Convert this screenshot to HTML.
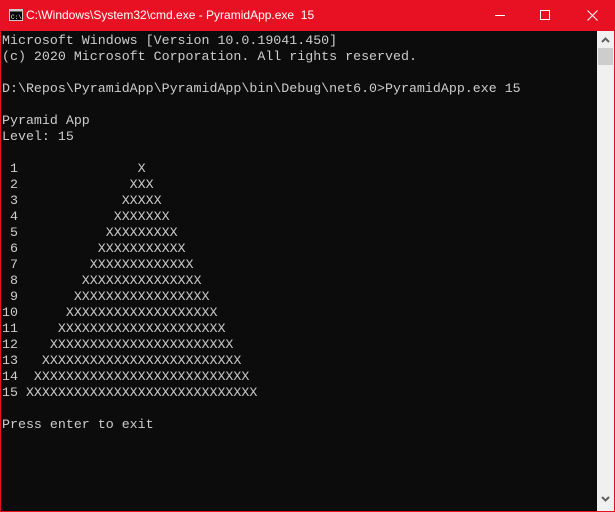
<!DOCTYPE html>
<html><head><style>
*{margin:0;padding:0;box-sizing:border-box}
body{width:615px;height:512px;background:#e81123;position:relative;overflow:hidden;font-family:"Liberation Sans",sans-serif}
#tb{position:absolute;left:0;top:0;width:615px;height:31px;color:#fff;font-size:12px}
#console{position:absolute;left:1px;top:31px;width:596px;height:480px;background:#0c0c0c}
pre{position:absolute;left:1px;top:2px;font-family:"Liberation Mono",monospace;font-size:13.3px;line-height:16px;color:#cccccc}
#sb{position:absolute;left:597px;top:31px;width:17px;height:480px;background:#f0f0f0}
#thumb{position:absolute;left:1px;top:17px;width:15px;height:17px;background:#cdcdcd}
</style></head><body>
<div id="tb">
<svg style="position:absolute;left:9px;top:9px" width="14" height="12"><rect x="0.5" y="0.5" width="13" height="11" fill="#000" stroke="#ccc"/><rect x="0.5" y="0.5" width="13" height="2" fill="#ccc"/><text x="2" y="10" font-size="6" fill="#fff" font-family="Liberation Mono">C:\</text></svg>
<span style="position:absolute;left:26px;top:8px">C:\Windows\System32\cmd.exe - PyramidApp.exe&nbsp; 15</span>
<div style="position:absolute;left:495px;top:15px;width:10px;height:1px;background:#fff"></div>
<div style="position:absolute;left:540px;top:10px;width:10px;height:10px;border:1px solid #fff"></div>
<svg style="position:absolute;left:587px;top:10px" width="11" height="11"><path d="M0.5 0.5L10.5 10.5M10.5 0.5L0.5 10.5" stroke="#fff" stroke-width="1"/></svg>
</div>
<div id="console"><pre>Microsoft Windows [Version 10.0.19041.450]
(c) 2020 Microsoft Corporation. All rights reserved.

D:\Repos\PyramidApp\PyramidApp\bin\Debug\net6.0>PyramidApp.exe 15

Pyramid App
Level: 15

 1               X
 2              XXX
 3             XXXXX
 4            XXXXXXX
 5           XXXXXXXXX
 6          XXXXXXXXXXX
 7         XXXXXXXXXXXXX
 8        XXXXXXXXXXXXXXX
 9       XXXXXXXXXXXXXXXXX
10      XXXXXXXXXXXXXXXXXXX
11     XXXXXXXXXXXXXXXXXXXXX
12    XXXXXXXXXXXXXXXXXXXXXXX
13   XXXXXXXXXXXXXXXXXXXXXXXXX
14  XXXXXXXXXXXXXXXXXXXXXXXXXXX
15 XXXXXXXXXXXXXXXXXXXXXXXXXXXXX

Press enter to exit</pre></div>
<div id="sb"><svg style="position:absolute;left:4px;top:6px" width="9" height="6"><path d="M1 5L4.5 1.5L8 5" stroke="#606060" stroke-width="2" fill="none"/></svg><div id="thumb"></div>
<svg style="position:absolute;left:4px;top:465px" width="9" height="6"><path d="M1 1L4.5 4.5L8 1" stroke="#606060" stroke-width="2" fill="none"/></svg></div>
</body></html>
